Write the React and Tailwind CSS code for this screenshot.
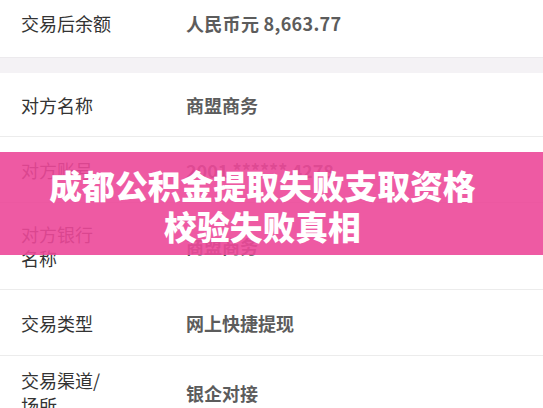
import React from "react";

const font = { fontFamily: '"Noto Sans CJK SC", "Noto Sans", sans-serif' };

function Row({ label, value, className = "" }) {
  return (
    <div className={`flex items-center border-b border-[#ececec] ${className}`}>
      <div className="w-[186px] pl-[21px] text-[18px] leading-[24px] text-[#333]">{label}</div>
      <div className="text-[18px] leading-[24px] font-semibold text-[#5c5c5c]">{value}</div>
    </div>
  );
}

export default function App() {
  return (
    <div className="relative w-[543px] h-[408px] overflow-hidden bg-white" style={font}>
      <div className="flex h-[57px] items-center pb-[12px]">
        <div className="w-[186px] pl-[21px] text-[18px] leading-[24px] text-[#333]">交易后余额</div>
        <div className="text-[18px] leading-[24px] font-semibold text-[#5c5c5c] tracking-[0.3px]">人民币元 8,663.77</div>
      </div>
      <div className="h-[16px] bg-[#f4f2f5] border-t border-[#eceaed]" />
      <Row className="h-[64px]" label="对方名称" value="商盟商务" />
      <Row className="h-[66px]" label="对方账号" value="2001 ****** 4278" />
      <Row
        className="h-[87px]"
        label={
          <>
            对方银行
            <br />
            名称
          </>
        }
        value="商盟商务"
      />
      <Row className="h-[66px]" label="交易类型" value="网上快捷提现" />
      <div className="flex h-[70px] items-center pt-[4px]">
        <div className="w-[186px] pl-[21px] text-[18px] leading-[25px] text-[#333]">
          交易渠道/
          <br />
          场所
        </div>
        <div className="text-[18px] leading-[24px] font-semibold text-[#5c5c5c]">银企对接</div>
      </div>

      <div className="absolute left-0 right-0 top-[152px] h-[103px] bg-[#ec4899]/90 flex items-center justify-center pr-[18px]">
        <div className="text-center text-white font-black text-[32.8px] leading-[41px] pt-[3px]">
          成都公积金提取失败支取资格
          <br />
          校验失败真相
        </div>
      </div>
    </div>
  );
}
